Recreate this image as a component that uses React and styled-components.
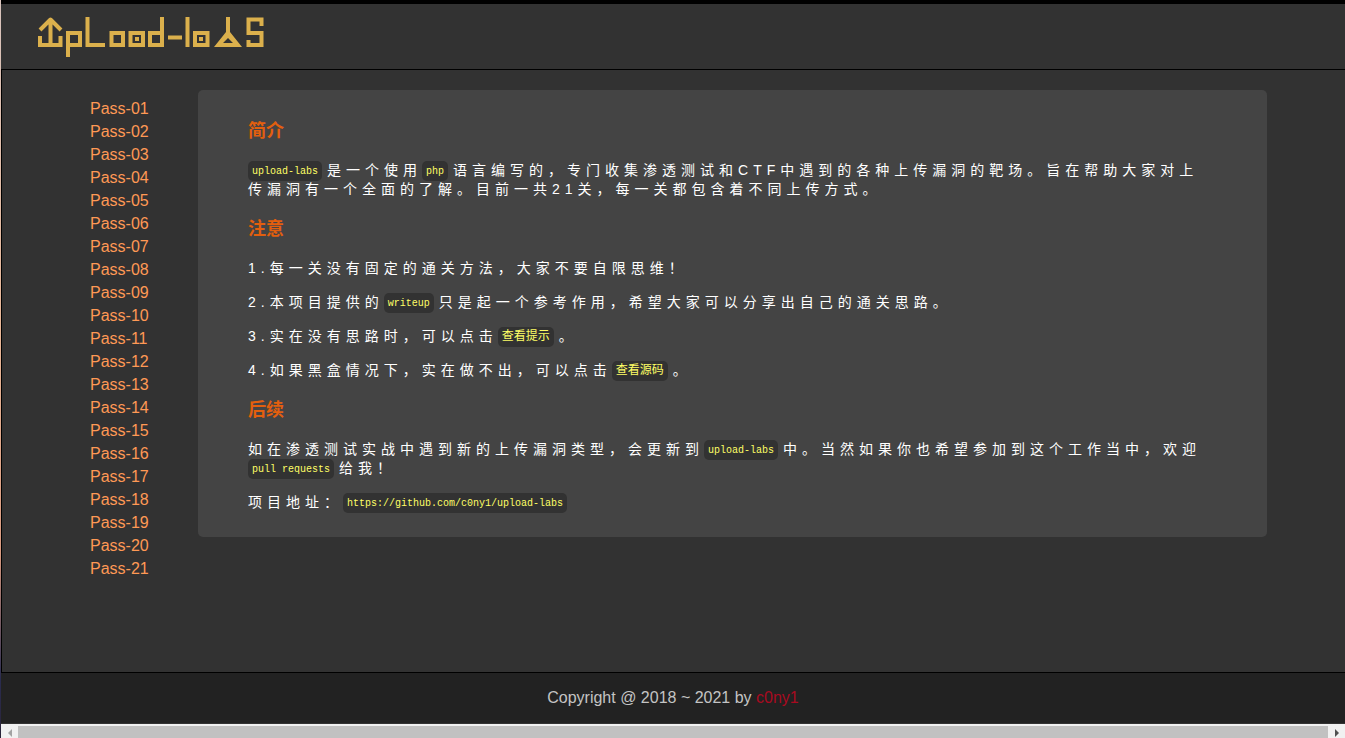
import React from 'react';
import styled, { createGlobalStyle } from 'styled-components';

const Colors = {
  background: '#323232',
  panel: '#444444',
  code: '#323232',
  footer: '#222222',
  heading: '#e35f0e',
  link: '#ff9955',
  codeText: '#ffff66',
  logo: '#dbb04c',
  author: '#a80a20',
};

const GlobalStyle = createGlobalStyle`
  * {
    box-sizing: border-box;
  }
  body {
    margin: 0;
    background: ${Colors.background};
    font-family: 'Liberation Sans', 'Noto Sans CJK SC', sans-serif;
    font-size: 16px;
  }
  a {
    text-decoration: none;
  }
`;

const Page = styled.div`
  min-height: 100vh;
  display: flex;
  flex-direction: column;
  padding-left: 1px;
  background: linear-gradient(#d9c4bd, #e8b696 45%, #d99a80 75%, #2a2c50 92%, #2a2438);
`;

const Header = styled.header`
  height: 69px;
  padding: 10px 36px;
  border-top: 4px solid #000;
  background: ${Colors.background};
`;

const LogoSvg = styled.svg`
  display: block;
  width: 230px;
  height: 45px;
`;

const Main = styled.main`
  flex: 1;
  display: flex;
  align-items: flex-start;
  padding: 20px 78px 20px 88px;
  border: 1px solid #000;
  border-right: 0;
  background: ${Colors.background};
`;

const Sidebar = styled.nav`
  flex: 0 0 108px;
`;

const Menu = styled.ul`
  margin: 0;
  padding: 7px 0 0;
  list-style: none;
`;

const MenuItem = styled.li`
  line-height: 23px;
  a {
    color: ${Colors.link};
  }
`;

const Panel = styled.article`
  flex: 1;
  padding: 31px 50px 25px;
  border-radius: 5px;
  background: ${Colors.panel};
`;

const Heading = styled.h3`
  margin: 20px 0;
  color: ${Colors.heading};
  font-size: 18px;
  line-height: 20px;
  &:first-child {
    margin-top: 0;
  }
`;

const Text = styled.p`
  margin: 15px 0;
  color: #fff;
  font-size: 14px;
  line-height: 19px;
  letter-spacing: 5px;
  &:last-child {
    margin-bottom: 0;
  }
`;

const Code = styled.code`
  display: inline-block;
  height: 20px;
  margin: -2px 5px -2px 0;
  padding: 0 4px;
  border-radius: 5px;
  background: ${Colors.code};
  color: ${Colors.codeText};
  font-family: 'Liberation Mono', 'Noto Sans CJK SC', monospace;
  font-size: ${({ $wide }) => ($wide ? 12 : 10)}px;
  line-height: 21px;
  letter-spacing: 0;
  vertical-align: middle;
`;

const Footer = styled.footer`
  padding: 15px 0 16px;
  border-bottom: 1px solid #333;
  background: ${Colors.footer};
  color: #c4c4c4;
  line-height: 19px;
  text-align: center;
  a {
    color: ${Colors.author};
  }
`;

const ScrollBar = styled.div`
  display: flex;
  height: 14px;
  background: #f1f1f1;
`;

const ScrollButton = styled.button`
  flex: 0 0 17px;
  display: flex;
  align-items: center;
  justify-content: center;
  padding: 3px 0 0;
  border: 0;
  background: none;
  color: ${({ $active }) => ($active ? '#505050' : '#a3a3a3')};
`;

const ScrollThumb = styled.div`
  flex: 1;
  margin-top: 2px;
  background: #c1c1c1;
`;

const Logo = () => (
  <LogoSvg viewBox="37 14 230 45" role="img" aria-label="upload-labs">
    <g fill="none" stroke={Colors.logo} strokeWidth="4">
      <path d="M50.5 19V45M40 30L50.5 19.500L61 30" strokeLinejoin="round" />
      <path d="M40 36V45H60.500V36" />
      <path d="M68 57V33H80V45H68" />
      <path d="M87.500 17V45H105" />
      <path d="M111.500 33H123V45H111.500Z" />
      <path d="M130.500 33H143V45H130.500Z" />
      <path d="M162 17V45H150V33H162" />
      <path d="M168 37.500H182" />
      <path d="M187.500 17V47" />
      <path d="M195 33H207.500V45H195Z" />
      <path d="M228 17V34" />
      <path d="M261.500 26V19.500H248.500V33H261.500V45H248.500V40" />
    </g>
    <g fill={Colors.logo}>
      <path d="M135 37h4v4h-4zM199 37h4v4h-4z" />
      <path fillRule="evenodd" d="M226 32H230L242 47H214ZM228 38L223 43H233Z" />
    </g>
  </LogoSvg>
);

const passes = Array.from({ length: 21 }, (_, i) => `Pass-${String(i + 1).padStart(2, '0')}`);

const App = () => (
  <>
    <GlobalStyle />
    <Page>
      <Header>
        <Logo />
      </Header>
      <Main>
        <Sidebar>
          <Menu>
            {passes.map((pass) => (
              <MenuItem key={pass}>
                <a href={`#${pass}`}>{pass}</a>
              </MenuItem>
            ))}
          </Menu>
        </Sidebar>
        <Panel>
          <Heading>简介</Heading>
          <Text>
            <Code>upload-labs</Code>是一个使用<Code>php</Code>语言编写的，专门收集渗透测试和CTF中遇到的各种上传漏洞的靶场。旨在帮助大家对上传漏洞有一个全面的了解。目前一共21关，每一关都包含着不同上传方式。
          </Text>
          <Heading>注意</Heading>
          <Text>1.每一关没有固定的通关方法，大家不要自限思维！</Text>
          <Text>
            2.本项目提供的<Code>writeup</Code>只是起一个参考作用，希望大家可以分享出自己的通关思路。
          </Text>
          <Text>
            3.实在没有思路时，可以点击<Code $wide>查看提示</Code>。
          </Text>
          <Text>
            4.如果黑盒情况下，实在做不出，可以点击<Code $wide>查看源码</Code>。
          </Text>
          <Heading>后续</Heading>
          <Text>
            如在渗透测试实战中遇到新的上传漏洞类型，会更新到<Code>upload-labs</Code>中。当然如果你也希望参加到这个工作当中，欢迎<Code>pull requests</Code>给我！
          </Text>
          <Text>
            项目地址：<Code>https://github.com/c0ny1/upload-labs</Code>
          </Text>
        </Panel>
      </Main>
      <Footer>
        Copyright @ 2018 ~ 2021 by <a href="#c0ny1">c0ny1</a>
      </Footer>
      <ScrollBar>
        <ScrollButton type="button" aria-label="Scroll left">
          <svg width="4" height="8" viewBox="0 0 4 8">
            <path d="M4 0V8L0 4Z" fill="currentColor" />
          </svg>
        </ScrollButton>
        <ScrollThumb />
        <ScrollButton type="button" aria-label="Scroll right" $active>
          <svg width="4" height="8" viewBox="0 0 4 8">
            <path d="M0 0V8L4 4Z" fill="currentColor" />
          </svg>
        </ScrollButton>
      </ScrollBar>
    </Page>
  </>
);

export default App;
